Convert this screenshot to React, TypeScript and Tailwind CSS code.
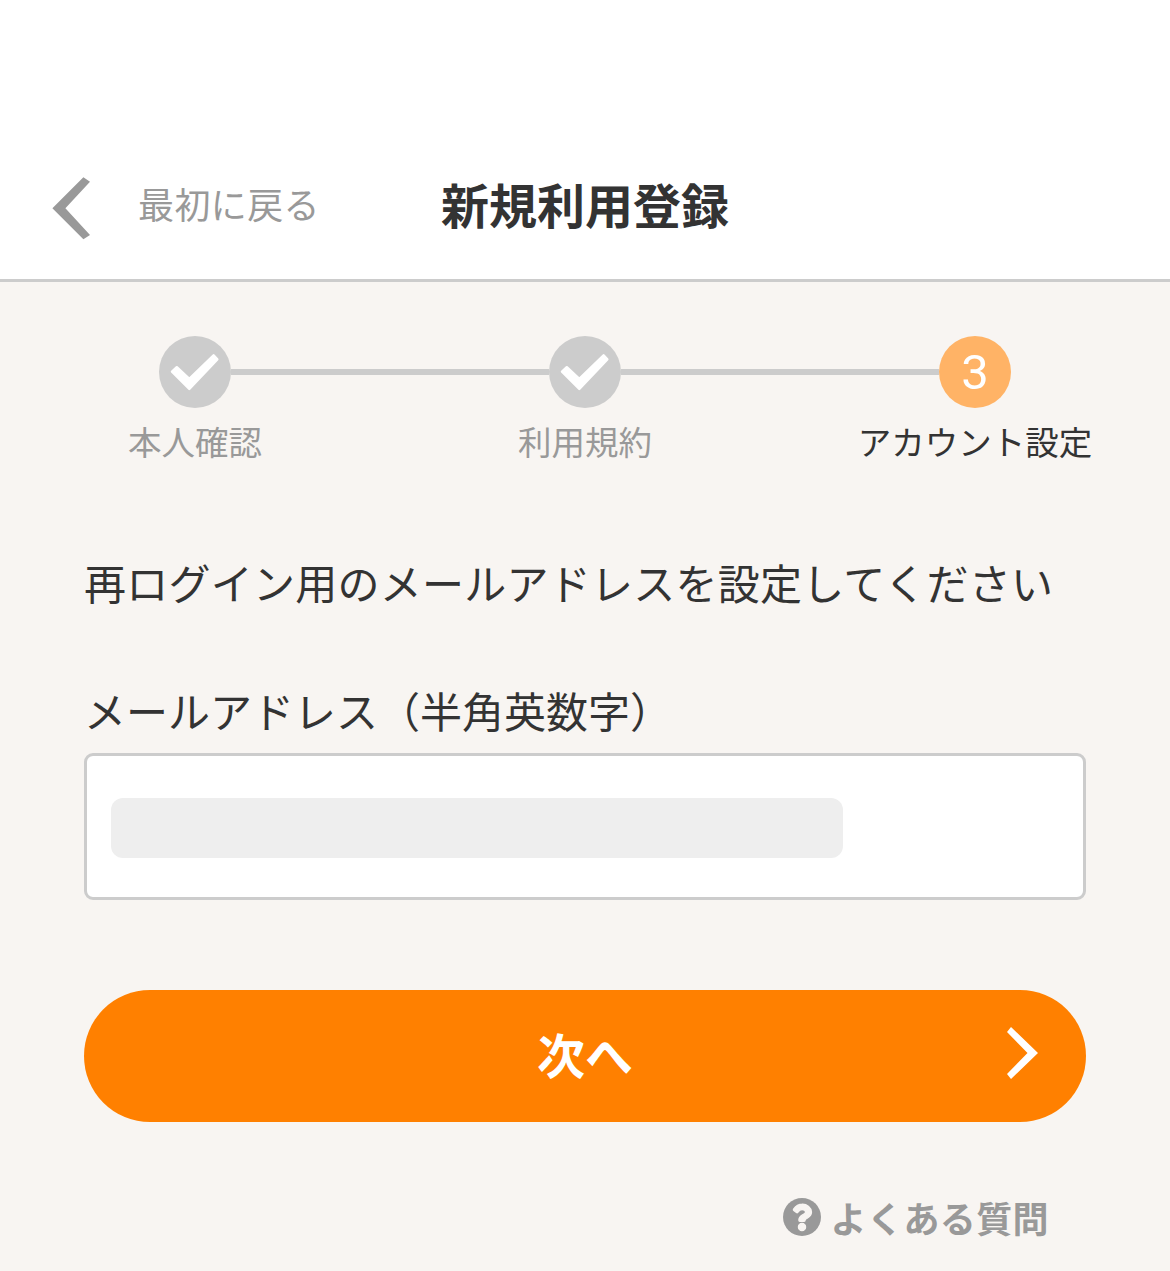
const FONT = "font-['Noto_Sans_CJK_JP','Noto_Sans_CJK_SC',sans-serif]";

function Check() {
  return (
    <div className="flex h-[72px] w-[72px] shrink-0 items-center justify-center rounded-full bg-[#cccccc]">
      <svg width="72" height="72" viewBox="0 0 72 72">
        <polygon
          points="13,35.700 17.800,31.200 30.300,43 54.600,19.300 58.300,23.300 30.300,52.800"
          fill="#ffffff"
          stroke="#ffffff"
          strokeWidth="2.500"
          strokeLinejoin="round"
        />
      </svg>
    </div>
  );
}

function Line() {
  return <div className="h-[6px] flex-1 bg-[#cccccc]" />;
}

export default function App() {
  return (
    <div className={`h-[1271px] w-[1170px] overflow-hidden bg-[#f8f5f2] ${FONT}`}>
      {/* ヘッダー */}
      <header className="relative flex h-[282px] items-center justify-center border-b-[3px] border-[#cccccc] bg-white pt-[126px]">
        <div className="absolute left-[52px] top-[176px] flex items-center">
          <svg width="38" height="63" viewBox="0 0 38 63">
            <polygon points="0.400,31.300 31.400,0.300 38,4.700 13.400,31.300 38,58 31.400,62.300" fill="#999999" />
          </svg>
          <span className="mb-[10px] ml-[48px] text-[36px] leading-[54px] tracking-[0.4px] text-[#999999]">最初に戻る</span>
        </div>
        <h1 className="text-[48px] font-bold leading-[72px] text-[#333333]">新規利用登録</h1>
      </header>

      {/* ステップ */}
      <div className="flex items-center px-[159px] pt-[54px]">
        <Check />
        <Line />
        <Check />
        <Line />
        <div className="flex h-[72px] w-[72px] shrink-0 items-center justify-center rounded-full bg-[#ffb366] pt-[1px] font-['Roboto',sans-serif] text-[49px] font-normal text-white">
          3
        </div>
      </div>
      <div className="mt-[8px] grid grid-cols-3 text-center text-[33.5px] leading-[50px]">
        <span className="text-[#999999]">本人確認</span>
        <span className="text-[#999999]">利用規約</span>
        <span className="text-[#333333]">アカウント設定</span>
      </div>

      {/* フォーム */}
      <div className="px-[84px]">
        <p className="mt-[84px] text-[42px] leading-[63px] tracking-[0.25px] text-[#333333]">再ログイン用のメールアドレスを設定してください</p>
        <label className="mt-[65px] block text-[42px] leading-[63px] text-[#333333]">メールアドレス（半角英数字）</label>
        <div className="mt-[12px] flex h-[147px] items-center rounded-[9px] border-[3px] border-[#cccccc] bg-white pl-[24px] pt-[2px]">
          <div className="h-[60px] w-[732px] rounded-[12px] bg-[#eeeeee]" />
        </div>

        <button className="relative mt-[90px] flex h-[132px] w-full items-center justify-center rounded-full bg-[#ff8000] pb-[6px] text-[48px] font-bold text-white">
          次へ
          <svg className="absolute right-[48px] top-[37px]" width="31" height="52" viewBox="0 0 31 52">
            <polygon points="0,5 4,0 31,26 4,52 0,47 20.500,26" fill="#ffffff" />
          </svg>
        </button>

        <div className="mt-[68px] flex items-center justify-end pr-[37px] text-[#999999]">
          <svg width="38" height="38" viewBox="8 8 496 496">
            <circle cx="256" cy="256" r="248" fill="#999999" />
            <path
              d="M262.700 90c-54.500 0-89.300 23-116.500 63.800-3.500 5.300-2.400 12.400 2.700 16.300l34.700 26.300c5.200 3.900 12.600 3 16.700-2.100 17.900-22.700 30.100-35.800 57.300-35.800 20.400 0 45.700 13.100 45.700 32.900 0 15-12.400 22.700-32.600 34-23.600 13.200-54.800 29.700-54.800 70.900V300c0 6.600 5.400 12 12 12h56c6.600 0 12-5.400 12-12v-1.300c0-28.600 83.500-29.800 83.500-107.200 0-58.300-60.500-102.500-116.700-102.500zM256 339c-25.500 0-46.200 20.700-46.200 46.200s20.700 46.200 46.200 46.200 46.200-20.700 46.200-46.200S281.500 339 256 339z"
              fill="#f8f5f2"
              stroke="#f8f5f2"
              strokeWidth="18"
            />
          </svg>
          <span className="ml-[10px] text-[36px] font-bold leading-[54px] tracking-[0.4px]">よくある質問</span>
        </div>
      </div>
    </div>
  );
}
